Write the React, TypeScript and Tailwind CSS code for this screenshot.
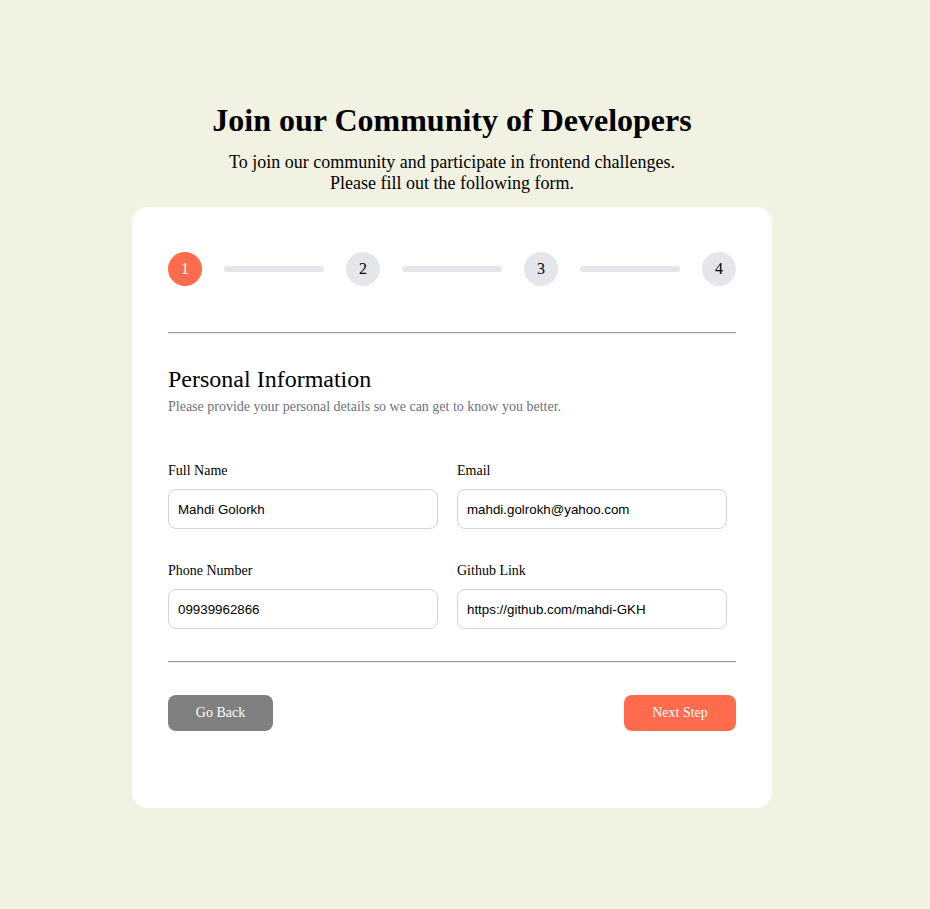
const serif = { fontFamily: '"Liberation Serif", "Times New Roman", serif' };

const steps = [1, 2, 3, 4];

const fields = [
  { label: 'Full Name', value: 'Mahdi Golorkh' },
  { label: 'Email', value: 'mahdi.golrokh@yahoo.com' },
  { label: 'Phone Number', value: '09939962866' },
  { label: 'Github Link', value: 'https://github.com/mahdi-GKH' },
];

function Divider() {
  return <div className="h-0 w-full border-t border-b border-t-[#9b9b9b] border-b-[#ececec]" />;
}

function Stepper() {
  return (
    <div className="flex items-center">
      {steps.map((n, i) => (
        <div key={n} className="flex items-center">
          <div
            className={
              n === 1
                ? 'flex h-[34px] w-[34px] items-center justify-center rounded-full bg-[#ff6b4d] text-base text-white'
                : 'flex h-[34px] w-[34px] items-center justify-center rounded-full bg-[#e5e6ea] text-base text-black'
            }
          >
            {n}
          </div>
          {i < steps.length - 1 && <div className="mx-[22px] h-[6px] w-[100px] rounded-full bg-[#e5e6ea]" />}
        </div>
      ))}
    </div>
  );
}

export default function App() {
  return (
    <div className="min-h-[909px] w-full bg-[#f2f2e3] pt-[101px] pr-[26px] text-black" style={serif}>
      <div className="mx-auto flex w-[640px] flex-col items-center">
        <h1 className="text-[32px] font-bold leading-[38px]">Join our Community of Developers</h1>
        <p className="mt-[13px] text-center text-lg leading-[21px]">
          To join our community and participate in frontend challenges.
          <br />
          Please fill out the following form.
        </p>

        <div className="mt-[13px] w-full rounded-2xl bg-white px-9 pt-[45px] pb-[77px]">
          <Stepper />

          <div className="mt-[46px]">
            <Divider />
          </div>

          <h2 className="mt-[31px] text-2xl leading-[28px]">Personal Information</h2>
          <p className="mt-[6px] text-sm leading-4 text-[#6b7280]">
            Please provide your personal details so we can get to know you better.
          </p>

          <div className="mt-[48px] grid grid-cols-[270px_270px] gap-x-[19px] gap-y-[34px]">
            {fields.map((f) => (
              <div key={f.label} className="flex flex-col">
                <label className="text-sm leading-4">{f.label}</label>
                <input
                  readOnly
                  value={f.value}
                  className="mt-[10px] h-10 w-[270px] rounded-lg border border-[#d4d4d8] bg-white px-[9px] text-[13.333px] text-black outline-none"
                  style={{ fontFamily: '"Liberation Sans", Arial, sans-serif' }}
                />
              </div>
            ))}
          </div>

          <div className="mt-[32px]">
            <Divider />
          </div>

          <div className="mt-[32px] flex items-center justify-between">
            <button className="h-9 w-[105px] rounded-lg bg-[#808080] text-sm text-white">Go Back</button>
            <button className="h-9 w-[112px] rounded-lg bg-[#ff6b4d] text-sm text-white">Next Step</button>
          </div>
        </div>
      </div>
    </div>
  );
}
